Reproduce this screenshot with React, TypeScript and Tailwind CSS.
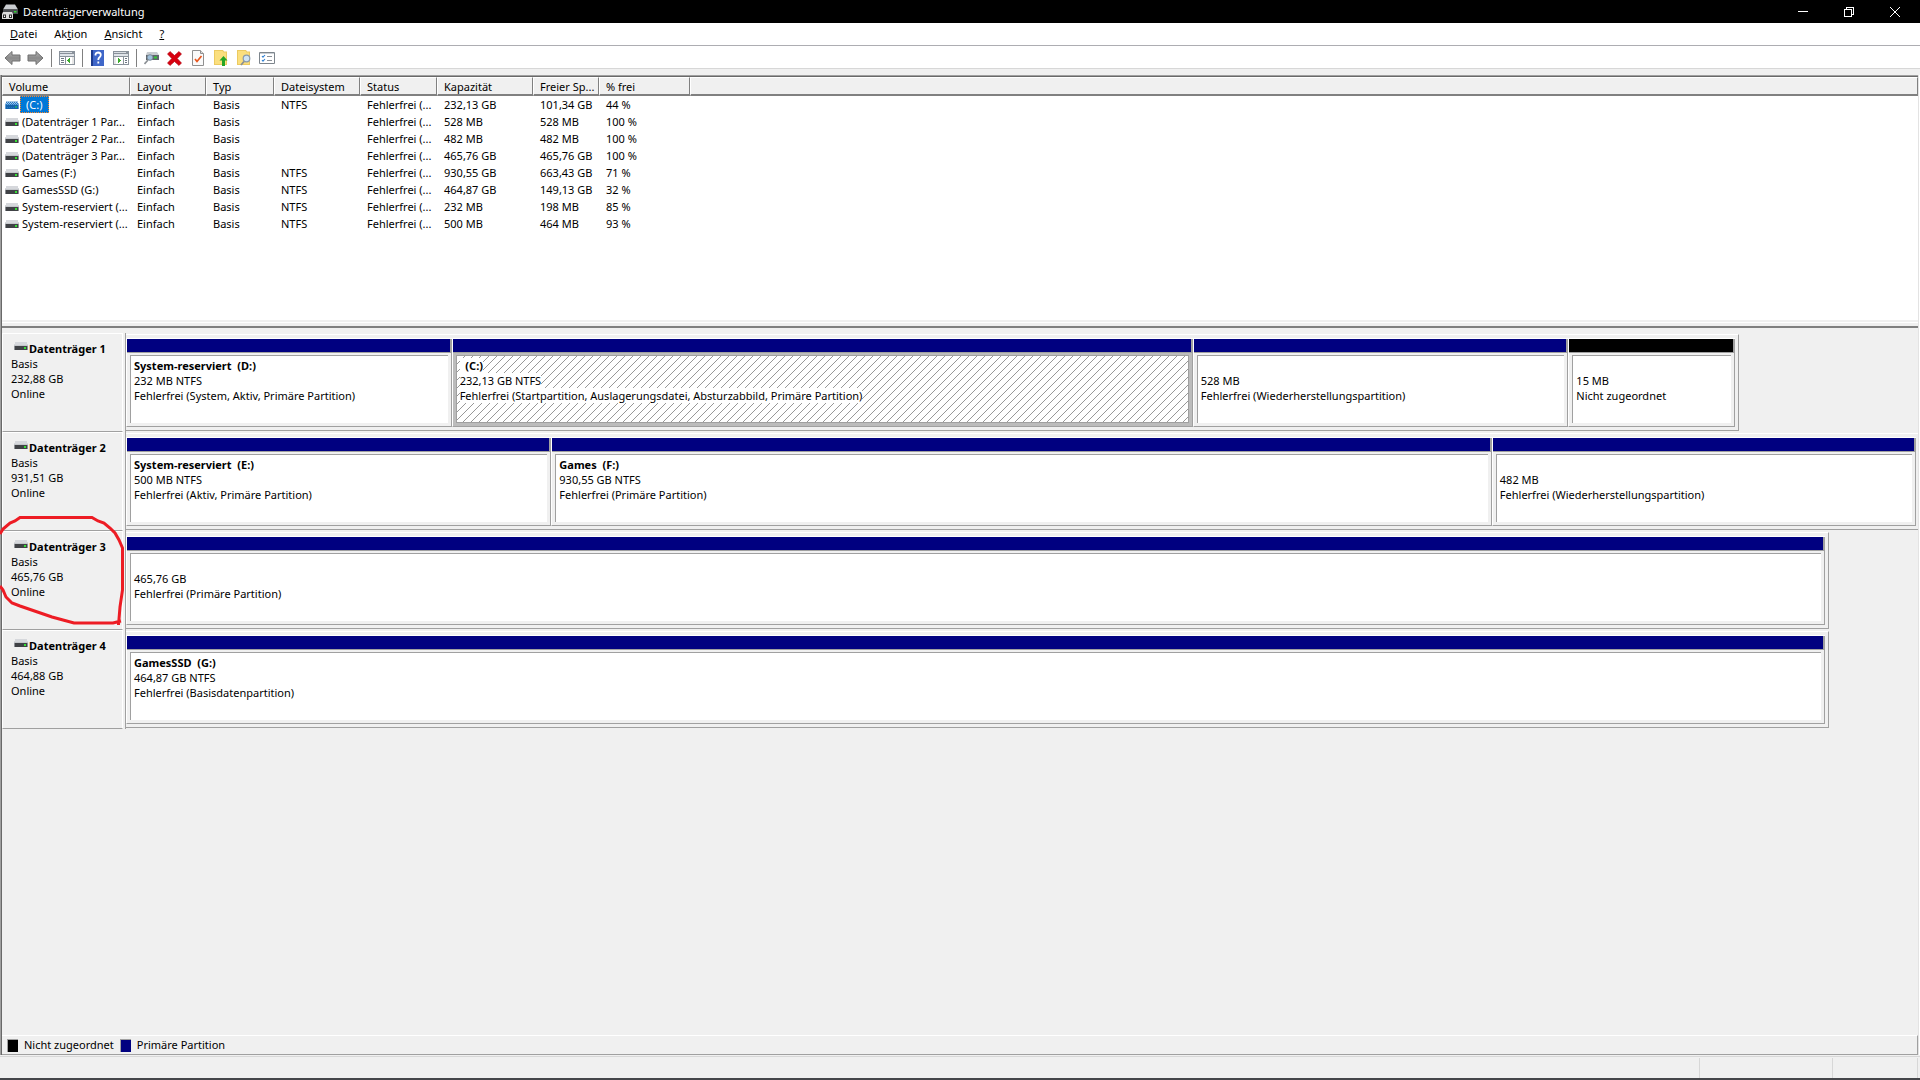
import type { ReactNode } from "react";

type Volume = {
  name: string;
  layout: string;
  type: string;
  fs: string;
  status: string;
  capacity: string;
  free: string;
  percent: string;
  selected?: boolean;
};

type Partition = {
  title?: string;
  size: string;
  status?: string;
  share: number;
  selected?: boolean;
  unallocated?: boolean;
};

type Disk = {
  name: string;
  size: string;
  width: number;
  marked?: boolean;
  partitions: Partition[];
};

const volumes: Volume[] = [
  { name: "(C:)", layout: "Einfach", type: "Basis", fs: "NTFS", status: "Fehlerfrei (...", capacity: "232,13 GB", free: "101,34 GB", percent: "44 %", selected: true },
  { name: "(Datenträger 1 Par...", layout: "Einfach", type: "Basis", fs: "", status: "Fehlerfrei (...", capacity: "528 MB", free: "528 MB", percent: "100 %" },
  { name: "(Datenträger 2 Par...", layout: "Einfach", type: "Basis", fs: "", status: "Fehlerfrei (...", capacity: "482 MB", free: "482 MB", percent: "100 %" },
  { name: "(Datenträger 3 Par...", layout: "Einfach", type: "Basis", fs: "", status: "Fehlerfrei (...", capacity: "465,76 GB", free: "465,76 GB", percent: "100 %" },
  { name: "Games (F:)", layout: "Einfach", type: "Basis", fs: "NTFS", status: "Fehlerfrei (...", capacity: "930,55 GB", free: "663,43 GB", percent: "71 %" },
  { name: "GamesSSD (G:)", layout: "Einfach", type: "Basis", fs: "NTFS", status: "Fehlerfrei (...", capacity: "464,87 GB", free: "149,13 GB", percent: "32 %" },
  { name: "System-reserviert (...", layout: "Einfach", type: "Basis", fs: "NTFS", status: "Fehlerfrei (...", capacity: "232 MB", free: "198 MB", percent: "85 %" },
  { name: "System-reserviert (...", layout: "Einfach", type: "Basis", fs: "NTFS", status: "Fehlerfrei (...", capacity: "500 MB", free: "464 MB", percent: "93 %" },
];

const disks: Disk[] = [
  {
    name: "Datenträger 1",
    size: "232,88 GB",
    width: 90.02,
    partitions: [
      { title: "System-reserviert  (D:)", size: "232 MB NTFS", status: "Fehlerfrei (System, Aktiv, Primäre Partition)", share: 325 },
      { title: "  (C:)", size: "232,13 GB NTFS", status: "Fehlerfrei (Startpartition, Auslagerungsdatei, Absturzabbild, Primäre Partition)", share: 741, selected: true },
      { size: "528 MB", status: "Fehlerfrei (Wiederherstellungspartition)", share: 375 },
      { size: "15 MB", status: "Nicht zugeordnet", share: 166, unallocated: true },
    ],
  },
  {
    name: "Datenträger 2",
    size: "931,51 GB",
    width: 100.12,
    partitions: [
      { title: "System-reserviert  (E:)", size: "500 MB NTFS", status: "Fehlerfrei (Aktiv, Primäre Partition)", share: 425 },
      { title: "Games  (F:)", size: "930,55 GB NTFS", status: "Fehlerfrei (Primäre Partition)", share: 941 },
      { size: "482 MB", status: "Fehlerfrei (Wiederherstellungspartition)", share: 424 },
    ],
  },
  {
    name: "Datenträger 3",
    size: "465,76 GB",
    width: 95.03,
    marked: true,
    partitions: [{ size: "465,76 GB", status: "Fehlerfrei (Primäre Partition)", share: 1 }],
  },
  {
    name: "Datenträger 4",
    size: "464,88 GB",
    width: 95.03,
    partitions: [{ title: "GamesSSD  (G:)", size: "464,87 GB NTFS", status: "Fehlerfrei (Basisdatenpartition)", share: 1 }],
  },
];

function DriveIcon({ selected = false }: { selected?: boolean }) {
  return (
    <svg width="14" height="8" viewBox="0 0 14 8" shapeRendering="crispEdges" className="shrink-0">
      <path d="M1 0h12v2H1zM0 2h14v2H0z" fill={selected ? "#a9c8e6" : "#d6d8dc"} />
      <path d="M0 3h14v1H0z" fill={selected ? "#6ea5d8" : "#c4c7cb"} />
      <path d="M1 4h12v4H1z" fill={selected ? "#1562aa" : "#404246"} />
      <path d="M0 4h1v4H0zM13 4h1v4h-1z" fill={selected ? "#5c9bd4" : "#8c8f93"} />
      <path d="M10 5h2v2h-2z" fill={selected ? "#17a07a" : "#35e035"} />
      {selected && (
        <path d="M1 1h1v1h-1zM3 1h1v1h-1zM5 1h1v1h-1zM7 1h1v1h-1zM9 1h1v1h-1zM11 1h1v1h-1zM2 2h1v1h-1zM4 2h1v1h-1zM6 2h1v1h-1zM8 2h1v1h-1zM10 2h1v1h-1zM12 2h1v1h-1zM1 3h1v1h-1zM3 3h1v1h-1zM5 3h1v1h-1zM7 3h1v1h-1zM9 3h1v1h-1zM11 3h1v1h-1zM2 6h1v1h-1zM4 6h1v1h-1zM6 6h1v1h-1zM8 6h1v1h-1z" fill="#1f78c8" />
      )}
    </svg>
  );
}

function AppIcon() {
  return (
    <svg width="16" height="16" viewBox="0 0 16 16">
      <path d="M4 0.500h9l3 5H1z" fill="#c9ccd0" />
      <path d="M1 5.500h15v4.500H1z" fill="#4a4d51" />
      <path d="M12 7h2.500v1.500H12z" fill="#35d435" />
      <path d="M1 8h9l1 2v5H0v-5z" fill="#dcdcdc" />
      <path d="M1 10.500h3v3.500H1zM7 10.500h3v3.500H7z" fill="#2c2c2c" />
      <path d="M2 11.500h1v1.500H2zM8 11.500h1v1.500H8z" fill="#fff" />
    </svg>
  );
}

function Arrow({ flip = false }: { flip?: boolean }) {
  return (
    <svg width="17" height="16" viewBox="0 0 17 16" className={flip ? "-scale-x-100" : ""}>
      <defs>
        <linearGradient id={flip ? "arrow-f" : "arrow-b"} x1="0" y1="0" x2="0" y2="1">
          <stop offset="0" stopColor="#b4b4b4" />
          <stop offset="0.5" stopColor="#8a8a8a" />
          <stop offset="1" stopColor="#a8a8a8" />
        </linearGradient>
      </defs>
      <path d="M1 8L8 1.500V5h8v6H8v3.500z" fill={flip ? "url(#arrow-f)" : "url(#arrow-b)"} stroke="#6e6e6e" />
    </svg>
  );
}

function Pane({ right = false }: { right?: boolean }) {
  return (
    <svg width="16" height="14" viewBox="0 0 16 14" shapeRendering="crispEdges">
      <path d="M0 0h16v14H0z" fill="#8a929b" />
      <path d="M1 1h12v1H1z" fill="#d9dde2" />
      <path d="M1 3h14v2H1z" fill="#dfe3e8" />
      <path d="M1 6h14v7H1z" fill="#fff" />
      {right ? (
        <>
          <path d="M10 6h1v7h-1z" fill="#8a929b" />
          <path d="M12 7h2v1h-2zM12 9h2v1h-2zM12 11h2v1h-2z" fill="#6c7681" />
          <path d="M1 6h2v7H1z" fill="#e6e6e6" />
          <path d="M5 7l3 2.500L5 12z" fill="#3bab2c" />
        </>
      ) : (
        <>
          <path d="M6 6h1v7H6z" fill="#8a929b" />
          <path d="M2 7h3v1H2zM2 9h3v1H2zM2 11h3v1H2z" fill="#6c7681" />
          <path d="M13 6h2v7h-2z" fill="#e6e6e6" />
          <path d="M11 7v5L8 9.500z" fill="#3bab2c" />
        </>
      )}
    </svg>
  );
}

function HelpIcon() {
  return (
    <svg width="13" height="16" viewBox="0 0 13 16">
      <path d="M0 0h13v16H0z" fill="#3f66c8" />
      <path d="M0 0h2v16H0z" fill="#1d3b8d" />
      <path d="M4.500 5.500V4.500Q5 2.500 7.200 2.500Q9.800 2.700 9.800 5Q9.600 6.500 8.300 7.500Q7.300 8.300 7.300 10M7.300 11.500v2" stroke="#fff" strokeWidth="1.800" fill="none" />
    </svg>
  );
}

function RescanIcon() {
  return (
    <svg width="16" height="14" viewBox="0 0 16 14">
      <path d="M3 1h10l2 3H2z" fill="#c8ccd0" />
      <path d="M2 4h13v5H2z" fill="#5f666c" />
      <path d="M10 5.500h3v2h-3z" fill="#35c935" />
      <circle cx="6" cy="6.500" r="2.800" fill="#9fc0dc" stroke="#7d8d9b" />
      <path d="M4 9l-3.500 4" stroke="#8b9095" strokeWidth="1.600" />
    </svg>
  );
}

function DeleteIcon() {
  return (
    <svg width="15" height="15" viewBox="0 0 15 15">
      <path d="M3 0.500L7.500 4.500L12 0.500L14.500 3L10.200 7.500L14.500 12L12 14.500L7.500 10.500L3 14.500L0.500 12L4.800 7.500L0.500 3z" fill="#d8000f" stroke="#a8000c" strokeWidth="0.600" />
    </svg>
  );
}

function CheckDocIcon() {
  return (
    <svg width="12" height="16" viewBox="0 0 12 16">
      <path d="M0.500 0.500h8l3 3v12H0.500z" fill="#fafafa" stroke="#909090" />
      <path d="M8.500 0.500v3h3" fill="#ddd" stroke="#909090" />
      <path d="M3 9l2 2.500L9.500 6" stroke="#e8561d" strokeWidth="1.700" fill="none" />
    </svg>
  );
}

function FolderUpIcon() {
  return (
    <svg width="14" height="16" viewBox="0 0 14 16">
      <path d="M0 0h9l1 1.500h3V15H0z" fill="#ecca60" />
      <path d="M1 1h7.500l1 1.500H12V14H1z" fill="#fbdf7e" />
      <path d="M9.500 6L13.500 10.500H11V16H8V10.500H5.500z" fill="#25a525" />
    </svg>
  );
}

function FolderSearchIcon() {
  return (
    <svg width="14" height="16" viewBox="0 0 14 16">
      <path d="M0 0h9l1 1.500h3V15H0z" fill="#ecca60" />
      <path d="M1 1h7.500l1 1.500H12V14H1z" fill="#fbdf7e" />
      <circle cx="9.500" cy="8.500" r="3.300" fill="#cfe4f5" stroke="#8a9bab" strokeWidth="1.200" />
      <path d="M7 11.500l-3 3.500" stroke="#8a8f95" strokeWidth="1.800" />
    </svg>
  );
}

function PropertiesIcon() {
  return (
    <svg width="16" height="12" viewBox="0 0 16 12">
      <path d="M0.500 0.500h15v11H0.500z" fill="#fff" stroke="#7d858c" />
      <path d="M1 1h14v1H1z" fill="#c9ced3" />
      <path d="M3 4l1 1.200L6 3M3 8l1 1.200L6 7" stroke="#2f7fd0" strokeWidth="1.100" fill="none" />
      <path d="M8 4.500h5M8 8.500h5" stroke="#8a9097" />
    </svg>
  );
}

function ToolButton({ label, children }: { label: string; children: ReactNode }) {
  return (
    <button type="button" aria-label={label} className="flex h-5 w-[23px] items-center justify-center">
      {children}
    </button>
  );
}

function Separator() {
  return (
    <div className="flex w-2 justify-center">
      <div className="h-[18px] w-px bg-[#808080]" />
    </div>
  );
}

function TitleBar() {
  return (
    <header className="flex h-[23px] items-center bg-black pl-0.5 text-white">
      <AppIcon />
      <h1 className="ml-[5px] leading-4">Datenträgerverwaltung</h1>
      <div className="ml-auto flex pr-0.5">
        <button type="button" aria-label="Minimieren" className="flex h-[23px] w-[46px] items-center justify-center">
          <svg width="10" height="10" viewBox="0 0 10 10" shapeRendering="crispEdges">
            <path d="M0 4h10v1H0z" fill="#fff" />
          </svg>
        </button>
        <button type="button" aria-label="Wiederherstellen" className="flex h-[23px] w-[46px] items-center justify-center">
          <svg width="10" height="10" viewBox="0 0 10 10" shapeRendering="crispEdges">
            <path d="M0.500 2.500h7v7h-7zM2.500 2.500v-2h7v7h-2" stroke="#fff" fill="none" />
          </svg>
        </button>
        <button type="button" aria-label="Schließen" className="flex h-[23px] w-[46px] items-center justify-center">
          <svg width="10" height="10" viewBox="0 0 10 10">
            <path d="M0 0l10 10M10 0L0 10" stroke="#fff" />
          </svg>
        </button>
      </div>
    </header>
  );
}

function MenuBar() {
  return (
    <nav className="flex h-[23px] items-center gap-px border-b border-[#adadb2] bg-white pl-0.5">
      <button type="button" className="px-2"><u>D</u>atei</button>
      <button type="button" className="px-2">Ak<u>t</u>ion</button>
      <button type="button" className="px-2"><u>A</u>nsicht</button>
      <button type="button" className="px-2"><u>?</u></button>
    </nav>
  );
}

function ToolBar() {
  return (
    <div className="flex h-[23px] items-center border-b border-[#d7d7d7] bg-white pt-0.5 pl-px">
      <ToolButton label="Zurück"><Arrow /></ToolButton>
      <ToolButton label="Vorwärts"><Arrow flip /></ToolButton>
      <Separator />
      <ToolButton label="Konsolenstruktur"><Pane /></ToolButton>
      <Separator />
      <ToolButton label="Hilfe"><HelpIcon /></ToolButton>
      <ToolButton label="Aktionsbereich"><Pane right /></ToolButton>
      <Separator />
      <ToolButton label="Datenträger neu einlesen"><RescanIcon /></ToolButton>
      <ToolButton label="Löschen"><DeleteIcon /></ToolButton>
      <ToolButton label="Aktiv markieren"><CheckDocIcon /></ToolButton>
      <ToolButton label="Öffnen"><FolderUpIcon /></ToolButton>
      <ToolButton label="Durchsuchen"><FolderSearchIcon /></ToolButton>
      <ToolButton label="Eigenschaften"><PropertiesIcon /></ToolButton>
    </div>
  );
}

const headers = ["Volume", "Layout", "Typ", "Dateisystem", "Status", "Kapazität", "Freier Sp...", "% frei", ""];

function VolumeList() {
  return (
    <div className="h-[246px] border-t border-[#a0a0a0]">
      <div className="h-[244px] border-t border-[#696969] bg-white">
        <table className="w-full table-fixed border-separate border-spacing-0 text-left whitespace-nowrap">
          <colgroup>
            <col className="w-[128px]" />
            <col className="w-[76px]" />
            <col className="w-[68px]" />
            <col className="w-[86px]" />
            <col className="w-[77px]" />
            <col className="w-[96px]" />
            <col className="w-[66px]" />
            <col className="w-[91px]" />
            <col />
          </colgroup>
          <thead>
            <tr>
              {headers.map((h, i) => (
                <th key={i} className="h-[19px] border-t border-r border-b-2 border-l border-t-white border-r-[#808080] border-b-[#808080] border-l-white bg-[#f0f0f0] p-0 pt-px pl-1.5 leading-[15px] font-normal">
                  {h}
                </th>
              ))}
            </tr>
          </thead>
          <tbody>
            {volumes.map((v, i) => (
              <tr key={i} className="h-[17px] leading-[17px]">
                <td className="p-0 pl-[3px]">
                  <div className="flex items-center">
                    <DriveIcon selected={v.selected} />
                    {v.selected ? (
                      <span className="ml-px h-[17px] border border-dotted border-[#ff8728] bg-[#0078d7] px-[5px] leading-[15px] text-white">{v.name}</span>
                    ) : (
                      <span className="ml-[3px]">{v.name}</span>
                    )}
                  </div>
                </td>
                <td className="p-0 pl-[7px]">{v.layout}</td>
                <td className="p-0 pl-[7px]">{v.type}</td>
                <td className="p-0 pl-[7px]">{v.fs}</td>
                <td className="p-0 pl-[7px]">{v.status}</td>
                <td className="p-0 pl-[7px]">{v.capacity}</td>
                <td className="p-0 pl-[7px]">{v.free}</td>
                <td className="p-0 pl-[7px]">{v.percent}</td>
                <td className="p-0" />
              </tr>
            ))}
          </tbody>
        </table>
      </div>
    </div>
  );
}

function PartitionBlock({ part }: { part: Partition }) {
  return (
    <div
      className="flex min-w-0 basis-0 flex-col border-t border-b border-l border-t-white border-b-[#a0a0a0] border-l-white"
      style={{ flexGrow: part.share }}
    >
      <div className={`h-3.5 border-r-2 border-b border-[#a0a0a0] ${part.unallocated ? "bg-black" : "bg-[#000080]"}`} />
      <div className={`flex-1 border-r border-[#a0a0a0] p-[3px] pt-0.5 ${part.selected ? "bg-[#bcbcbc]" : ""}`}>
        <div
          className={`h-full border-t border-l border-[#a0a0a0] pt-0.5 pl-[3px] leading-[15px] whitespace-pre ${
            part.selected
              ? "border-r border-b bg-white bg-[linear-gradient(135deg,transparent_46%,#989898_46%_54%,transparent_54%)] bg-size-[8px_8px]"
              : "bg-white"
          }`}
        >
          {[part.title ?? " ", part.size, part.status].map((line, i) => (
            <p key={i} className={i === 0 ? "font-bold" : ""}>
              <span className={part.selected ? "inline-block bg-white" : ""}>{line}</span>
            </p>
          ))}
        </div>
      </div>
    </div>
  );
}

function Scribble() {
  return (
    <svg width="126" height="112" viewBox="0 516 126 112" className="pointer-events-none absolute -top-[15px] -left-0.5">
      <path
        d="M0 534L3 529L10 523L15 521L20 517.500H92L98 521L104 523L110 528L115 533L119 540L122.500 548V590L120 607L118.500 625M121 621L113 623H74L63 620L52 617L20 606L12 603L6 597L3 590L0 586"
        fill="none"
        stroke="#ed1c24"
        strokeWidth="3"
      />
    </svg>
  );
}

function DiskRow({ disk }: { disk: Disk }) {
  return (
    <div className="relative flex h-[99px]">
      <div className="w-[121px] shrink-0 border-t border-r border-b border-l border-t-white border-r-white border-b-[#a0a0a0] border-l-white pt-[7px] pl-2 leading-[15px]">
        <div className="flex">
          <div className="ml-[3px] pt-px"><DriveIcon /></div>
          <h2 className="ml-px font-bold whitespace-nowrap">{disk.name}</h2>
        </div>
        <p>Basis</p>
        <p>{disk.size}</p>
        <p>Online</p>
      </div>
      <div className="w-[3px] shrink-0 border-r border-[#a0a0a0]" />
      <div className="min-w-0 flex-1 overflow-hidden py-px">
        <div
          className="flex h-[97px] border-t border-r border-b border-t-white border-r-[#a0a0a0] border-b-[#a0a0a0] py-[3px] pr-[3px]"
          style={{ width: `${disk.width}%` }}
        >
          {disk.partitions.map((p, i) => (
            <PartitionBlock key={i} part={p} />
          ))}
        </div>
      </div>
      {disk.marked && <Scribble />}
    </div>
  );
}

export default function App() {
  return (
    <div className="flex min-h-screen flex-col bg-[#f0f0f0] font-['Noto_Sans','Open_Sans',sans-serif] text-[11px] leading-4 text-black">
      <TitleBar />
      <MenuBar />
      <ToolBar />
      <main className="mt-1.5 flex flex-1 flex-col border-r border-l border-r-white border-l-[#a0a0a0]">
        <div className="flex flex-1 flex-col border-r border-l border-r-[#e3e3e3] border-l-[#696969]">
          <VolumeList />
          <div className="mt-px h-[6px] border-t border-b-2 border-t-white border-b-[#808080]" />
          <section className="flex-1 pt-[5px]">
            {disks.map((d) => (
              <DiskRow key={d.name} disk={d} />
            ))}
          </section>
          <div className="flex h-5 items-center border-t border-r border-b border-t-white border-r-[#a0a0a0] border-b-[#a0a0a0] pl-[5px]">
            <span className="h-[13px] w-[11px] border-t border-l border-[#a0a0a0] bg-black" />
            <span className="ml-1.5">Nicht zugeordnet</span>
            <span className="ml-1.5 h-[13px] w-[11px] border-t border-l border-[#a0a0a0] bg-[#000080]" />
            <span className="ml-1.5">Primäre Partition</span>
          </div>
        </div>
      </main>
      <footer className="mt-px flex h-[24px] justify-end border-t border-b-2 border-t-[#d7d7d7] border-b-[#45464a] bg-[#f0f0f0] pt-px pr-0.5">
        <div className="w-[133px] border-l border-[#d7d7d7]" />
        <div className="w-[86px] border-r border-l border-[#d7d7d7]" />
      </footer>
    </div>
  );
}
